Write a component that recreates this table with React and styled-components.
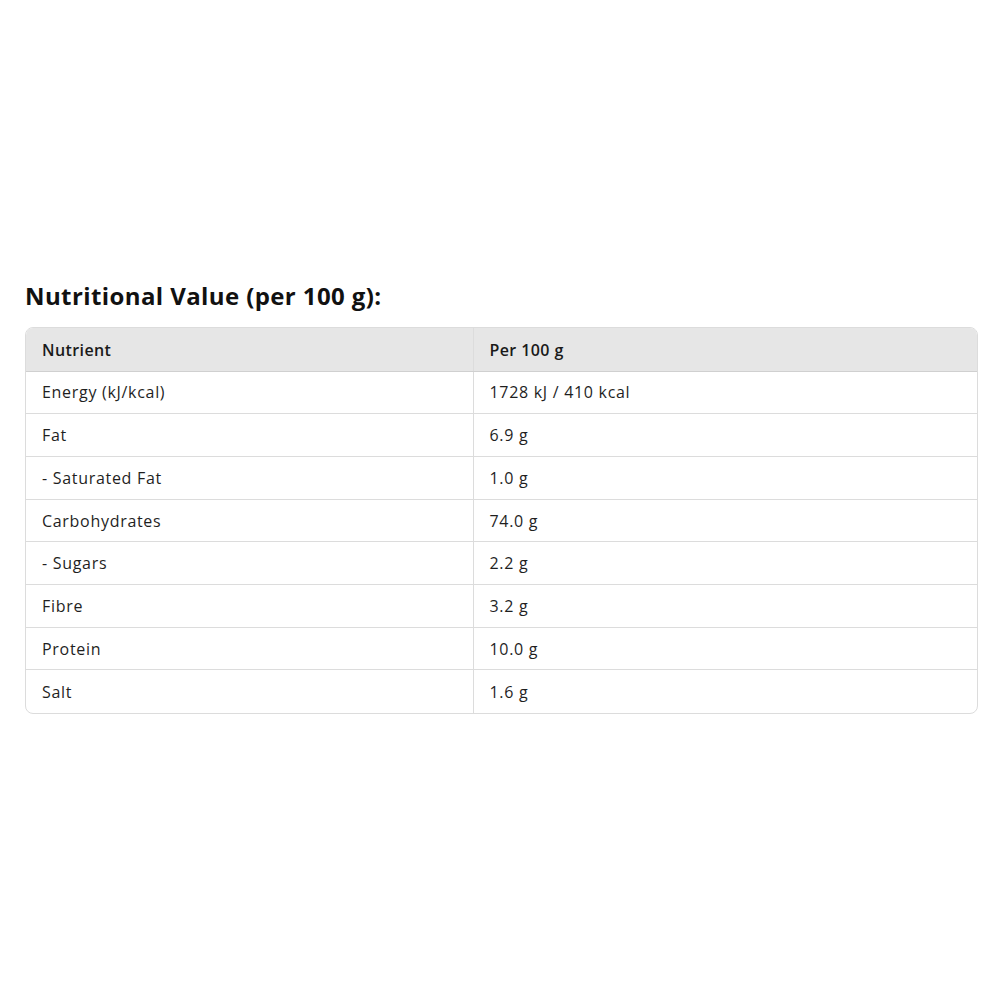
import React from 'react'
import styled, { createGlobalStyle } from 'styled-components';

const GlobalStyle = createGlobalStyle`
    body {
        margin: 0;
        background: #ffffff;
        font-family: "Open Sans", "Noto Sans", sans-serif;
        color: #1a1a1a;
    }
`;

const rows = [
    ['Energy (kJ/kcal)', '1728 kJ / 410 kcal'],
    ['Fat', '6.9 g'],
    ['- Saturated Fat', '1.0 g'],
    ['Carbohydrates', '74.0 g'],
    ['- Sugars', '2.2 g'],
    ['Fibre', '3.2 g'],
    ['Protein', '10.0 g'],
    ['Salt', '1.6 g'],
];

export default function App() {
    return (
        <>
            <GlobalStyle />
            <Page>
                <Section>
                    <Title>Nutritional Value (per 100 g):</Title>
                    <TableWrap>
                        <Table>
                            <thead>
                                <tr>
                                    <HeadCell $first>Nutrient</HeadCell>
                                    <HeadCell>Per 100 g</HeadCell>
                                </tr>
                            </thead>
                            <tbody>
                                {rows.map(([name, value], i) => (
                                    <Row key={name} $last={i === rows.length - 1}>
                                        <Cell $first>{name}</Cell>
                                        <Cell>{value}</Cell>
                                    </Row>
                                ))}
                            </tbody>
                        </Table>
                    </TableWrap>
                </Section>
            </Page>
        </>
    );
}

const Page = styled.div`
        min-height: 1000px;
        display: flex;
        align-items: center;
        padding: 0 22px 0 25px;
        box-sizing: border-box;
    `;

const Section = styled.div`
        width: 100%;
        margin-top: -7px;
    `;

const Title = styled.h2`
        margin: 0 0 15px;
        font-size: 24px;
        font-weight: 700;
        color: #111;
        letter-spacing: 0.4px;
    `;

const TableWrap = styled.div`
        border: 1px solid #dcdcdc;
        border-radius: 8px;
        overflow: hidden;
    `;

const Table = styled.table`
        width: 100%;
        border-collapse: collapse;
        table-layout: fixed;
        font-size: 16px;
        letter-spacing: 0.7px;
    `;

const HeadCell = styled.th`
        background: #e6e6e6;
        text-align: left;
        font-weight: 600;
        height: 42.7px;
        padding: 0 16px;
        box-sizing: border-box;
        border-bottom: 1px solid #d0d0d0;
        width: ${p => (p.$first ? '447px' : 'auto')};
        border-right: ${p => (p.$first ? '1px solid #dcdcdc' : 'none')};
        color: #1a1a1a;
        letter-spacing: 0.4px;
    `;

const Row = styled.tr`
        border-bottom: ${p => (p.$last ? 'none' : '1px solid #dcdcdc')};
    `;

const Cell = styled.td`
        height: 42.7px;
        padding: 0 16px;
        box-sizing: border-box;
        border-right: ${p => (p.$first ? '1px solid #dcdcdc' : 'none')};
        color: #1f1f1f;
    `;
